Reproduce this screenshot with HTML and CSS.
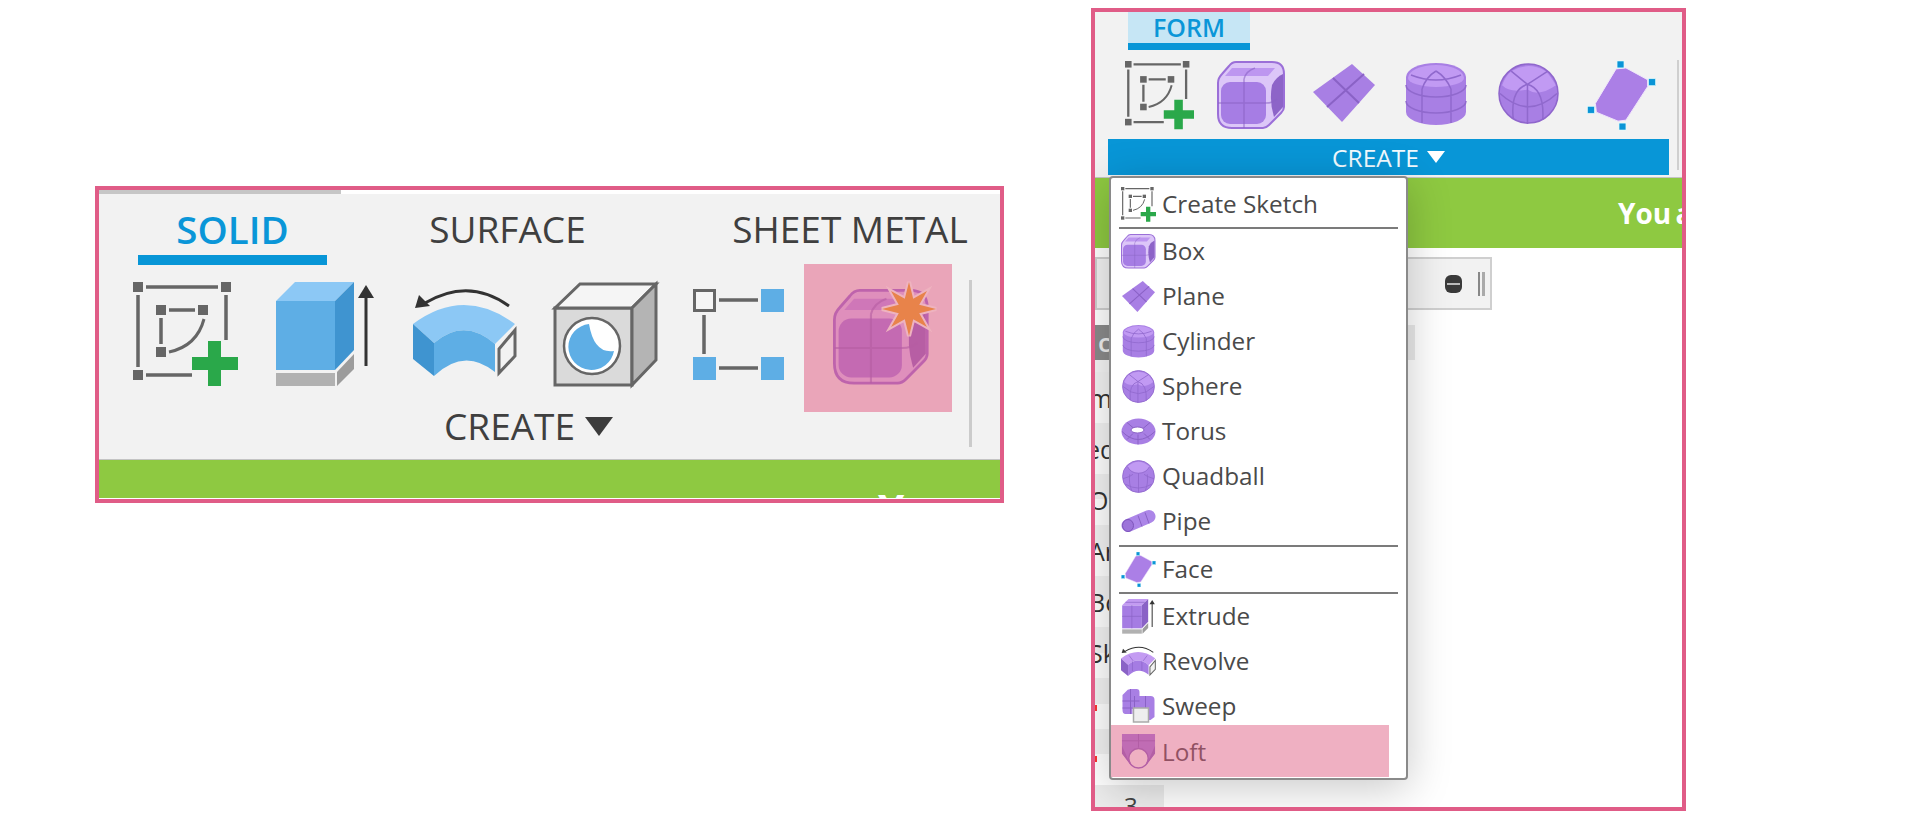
FILE: index.html
```html
<!DOCTYPE html>
<html lang="en">
<head>
<meta charset="utf-8">
<title>Ribbon create menus</title>
<link rel="stylesheet" href="styles.css">
</head>
<body>
<svg class="defs" aria-hidden="true">
  <defs>
    <g id="sketch">
      <g class="sk-sq">
        <rect x="0" y="0" width="10" height="10"/><rect x="88" y="0" width="10" height="10"/><rect x="0" y="88" width="10" height="10"/>
        <rect x="23" y="23" width="10" height="10"/><rect x="65" y="23" width="10" height="10"/><rect x="23" y="65" width="10" height="10"/>
      </g>
      <path class="sk-ln" d="M13 5H85M5 13V85M93 13V58M13 93H59M36 28H62M28 36V62"/>
      <path class="sk-arc" d="M36 70Q64 64 71 37"/>
      <path class="plus" d="M75 59H88V75H105V88H88V104H75V88H59V75H75Z"/>
    </g>
    <g id="box">
      <path class="bx-shell" d="M19 1H55Q67 1 67 13V46Q67 49 64 52L52 64Q49 67 46 67H15Q1 67 1 53V22Q1 17 5 13L12 5Q15 1 19 1Z"/>
      <path class="bx-top" d="M15 7H58L51 15H8Z"/>
      <rect class="bx-front" x="4" y="21" width="45" height="42" rx="9"/>
      <path class="bx-side" d="M55 24Q59 16 66 13V46L57 56Q52 40 55 24Z"/>
      <path class="bx-ln" d="M27 18Q29 10 38 7M27 18V67M1 42H49Q56 42 60 38"/>
    </g>
    <g id="plane">
      <path class="pp" d="M0 28L39 0L62 21L29 58Z"/>
      <path class="pl" d="M20 14L46 39M14 43L51 10"/>
    </g>
    <g id="cyl">
      <path class="pp" d="M0 14A30 14 0 0 1 60 14V49A30 13 0 0 1 0 49Z"/>
      <path class="pt" d="M2 15A28 13 0 0 1 58 15A28 9 0 0 1 2 15Z"/>
      <path class="pl soft" d="M0 22A30 12 0 0 0 60 22M0 38A30 12 0 0 0 60 38M16 26V60M45 26V60M16 26Q20 14 30 8M45 26Q40 14 30 8M5 12Q30 22 55 12"/>
    </g>
    <g id="sphere">
      <circle class="pp" cx="30" cy="30" r="29"/>
      <path class="pt" d="M13 8Q30 -2 47 8Q52 13 57 22Q40 34 29 26Q12 30 4 22Q7 13 13 8Z"/>
      <path class="pl soft" d="M13 8L29 21L49 8M29 21Q12 26 15 55M29 21V60M29 21Q46 26 44 56M2 30Q30 56 58 30"/>
      <circle class="po" cx="30" cy="30" r="29"/>
    </g>
    <g id="qball">
      <circle class="pp" cx="30" cy="30" r="29"/>
      <path class="pt" d="M10 12Q30 -6 50 12Q44 24 30 24Q16 24 10 12Z"/>
      <path class="pl soft" d="M10 12Q16 24 30 24Q44 24 50 12M30 24V59M2 34Q16 30 20 26M58 34Q44 30 40 26M6 44Q30 58 54 44M14 26Q12 44 18 56M46 26Q48 44 42 56"/>
      <circle class="po" cx="30" cy="30" r="29"/>
    </g>
    <g id="face">
      <path class="fc" d="M39 7L61 19V26L39 60L31 61L9 52L8 43L29 8Z"/>
      <rect class="hd" x="30" y="0" width="7" height="7"/><rect class="hd" x="62" y="18" width="7" height="7"/>
      <rect class="hd" x="0" y="46" width="7" height="7"/><rect class="hd" x="32" y="63" width="7" height="7"/>
    </g>
    <g id="extrude">
      <path class="f-front" d="M0 19H59V88H0Z"/>
      <path class="f-top" d="M0 19L19 0H78L59 19Z"/>
      <path class="f-side" d="M59 19L78 0V68L59 88Z"/>
      <path class="base" d="M0 91H59V104H0Z"/>
      <path class="base-side" d="M61 90L78 72V87L61 104Z"/>
      <path class="arrow-ln" d="M90 14V84"/>
      <path class="arrow-hd" d="M82 16L90 3L98 16Z"/>
    </g>
    <g id="revolve">
      <path class="arrow-ln arc" d="M96 17Q56 -12 12 14"/>
      <path class="arrow-hd" d="M2 19L6 6L17 17Z"/>
      <path class="f-top" d="M0 35Q51 -3 102 35L82 55Q51 28 21 54Z"/>
      <path class="f-front" d="M21 54Q51 28 82 55V83Q51 58 21 87Z"/>
      <path class="f-side" d="M0 35L21 54V87L0 70Z"/>
      <path class="prof" d="M86 60L102 41V67L86 84Z"/>
    </g>
  </defs>
</svg>

<main class="stage">
  <section class="panel panel-solid">
    <div class="strip"></div>
    <div class="ribbon">
      <div class="tabs">
        <div class="tab tab-on">SOLID</div>
        <div class="tab tab-surface">SURFACE</div>
        <div class="tab tab-sheet">SHEET METAL</div>
      </div>
      <div class="tools">
        <div class="tool-main">
          <div class="icons">
            <svg class="big-sketch" viewBox="0 0 105 105"><use href="#sketch"/></svg>
            <svg class="big-extrude blue" viewBox="0 0 98 105"><use href="#extrude"/></svg>
            <svg class="big-revolve blue" viewBox="0 0 104 88"><use href="#revolve"/></svg>
            <svg class="big-shell" viewBox="0 0 105 105">
              <path class="sh-front" d="M2 26H79V103H2Z"/>
              <path class="sh-top" d="M2 26L27 2H103L79 26Z"/>
              <path class="sh-side" d="M79 26L103 2V78L79 103Z"/>
              <circle class="sh-ring" cx="39" cy="64" r="28"/>
              <path class="sh-blue" d="M36 42A23 23 0 1 0 61 69Q41 72 36 42Z"/>
            </svg>
            <svg class="big-pattern" viewBox="0 0 91 91">
              <path class="pn-ln" d="M26 11H65M11 26V65M26 79H65"/>
              <rect class="pn-open" x="1.5" y="1.5" width="20" height="20"/>
              <rect class="pn-fill" x="68" y="0" width="23" height="23"/>
              <rect class="pn-fill" x="0" y="68" width="23" height="23"/>
              <rect class="pn-fill" x="68" y="68" width="23" height="23"/>
            </svg>
            <svg class="big-loft" viewBox="0 0 148 148">
              <rect class="canvas" width="148" height="148"/>
              <svg x="29" y="25" width="97" height="97" viewBox="0 0 69 69"><use href="#box"/></svg>
              <rect class="veil" width="148" height="148"/>
              <path class="star" transform="translate(105 45)" d="M0 -27L4.200 -10.200L18 -18L10.200 -4.200L27 0L10.200 4.200L18 18L4.200 10.200L0 27L-4.200 10.200L-18 18L-10.200 4.200L-27 0L-10.200 -4.200L-18 -18L-4.200 -10.200Z"/>
            </svg>
          </div>
          <div class="create">CREATE<span class="tri"></span></div>
        </div>
        <div class="vsep"></div>
      </div>
    </div>
    <div class="banner banner-solid">You are</div>
  </section>

  <section class="panel panel-form">
    <div class="form-ribbon">
      <div class="form-main">
        <div class="form-tab">FORM</div>
        <div class="form-icons">
          <svg class="fi" viewBox="0 0 105 105"><use href="#sketch"/></svg>
          <svg class="fi" viewBox="0 0 69 69"><use href="#box"/></svg>
          <svg class="fi-plane" viewBox="0 0 62 58"><use href="#plane"/></svg>
          <svg class="fi-cyl" viewBox="0 0 60 63"><use href="#cyl"/></svg>
          <svg class="fi-sphere" viewBox="0 0 60 60"><use href="#sphere"/></svg>
          <svg class="fi" viewBox="0 0 69 70"><use href="#face"/></svg>
        </div>
        <div class="form-create">CREATE<span class="tri tri-white"></span></div>
      </div>
      <div class="form-sep"></div>
    </div>
    <div class="banner banner-form">You are</div>
    <div class="page">
      <div class="page-bar">
        <span class="minus"></span>
        <span class="bar-grip"></span>
      </div>
      <div class="head-row"><span class="head-cell">c</span></div>
      <div class="rows">
        <div class="row">m</div>
        <div class="row row-ed">ed</div>
        <div class="row">O</div>
        <div class="row">Ar</div>
        <div class="row">Bo</div>
        <div class="row">Sk</div>
        <div class="row"><span class="red"></span></div>
        <div class="row"><span class="red"></span></div>
      </div>
      <div class="num-cell">3</div>
    </div>

    <div class="menu">
      <div class="mi">
        <svg class="mic" viewBox="0 0 105 105"><use href="#sketch"/></svg><span>Create Sketch</span>
      </div>
      <div class="msep"></div>
      <div class="mi">
        <svg class="mic" viewBox="0 0 69 69"><use href="#box"/></svg><span>Box</span>
      </div>
      <div class="mi">
        <svg class="mic mic-s" viewBox="0 0 62 58"><use href="#plane"/></svg><span>Plane</span>
      </div>
      <div class="mi">
        <svg class="mic mic-s" viewBox="0 0 60 63"><use href="#cyl"/></svg><span>Cylinder</span>
      </div>
      <div class="mi">
        <svg class="mic mic-s" viewBox="0 0 60 60"><use href="#sphere"/></svg><span>Sphere</span>
      </div>
      <div class="mi">
        <svg class="mic" viewBox="0 0 35 28">
          <ellipse class="pp" cx="17.500" cy="14" rx="17" ry="13"/>
          <path class="pl thin" d="M1 14Q17 30 34 14M6 5L13 11M29 5L22 11M17 17V27M6 22L12 16M29 22L23 16"/>
          <ellipse class="hole" cx="16.500" cy="12.500" rx="6.500" ry="3"/>
        </svg><span>Torus</span>
      </div>
      <div class="mi">
        <svg class="mic mic-s" viewBox="0 0 60 60"><use href="#qball"/></svg><span>Quadball</span>
      </div>
      <div class="mi">
        <svg class="mic" viewBox="0 0 35 24">
          <path class="pipe" d="M7 16L28 7"/>
          <ellipse class="pipe-end" cx="7" cy="16" rx="5.500" ry="6"/>
          <path class="pl thin" d="M17 6L21 17M24 3L28 14"/>
        </svg><span>Pipe</span>
      </div>
      <div class="msep msep-gap"></div>
      <div class="mi">
        <svg class="mic" viewBox="0 0 69 70"><use href="#face"/></svg><span>Face</span>
      </div>
      <div class="msep"></div>
      <div class="mi">
        <svg class="mic purple" viewBox="0 0 98 105">
          <use href="#extrude"/>
          <path class="pl" d="M29 19V88M0 52H59M10 10H68"/>
        </svg><span>Extrude</span>
      </div>
      <div class="mi">
        <svg class="mic purple" viewBox="0 0 104 88">
          <use href="#revolve"/>
          <path class="pl" d="M34 44V72M62 44V72M24 26L36 42M78 26L66 42"/>
        </svg><span>Revolve</span>
      </div>
      <div class="mi">
        <svg class="mic" viewBox="0 0 34 35">
          <path class="pp" d="M4 3Q6 0 9 0H15Q18 0 18 3V7H29Q33 7 33 11V28L29 31H26V20H11V25H4Q1 25 1 21V6Z"/>
          <path class="pl thin" d="M1 12H18M9 0V25M13 7V20M24 7V20M1 19H11"/>
          <rect class="swp" x="12" y="19" width="15" height="14"/>
        </svg><span>Sweep</span>
      </div>
      <div class="mi mi-loft">
        <svg class="mic" viewBox="0 0 34 36">
          <path class="bx-front" d="M0 0H34V20L25 32H9L0 20Z"/>
          <path class="bx-side" d="M0 12L9 32L0 20ZM34 12L25 32L34 20Z"/>
          <path class="pl thin" d="M17 0V14M0 7H34"/>
          <circle class="lf" cx="17" cy="25" r="10"/>
        </svg><span>Loft</span>
      </div>
    </div>
  </section>
</main>
</body>
</html>
```

FILE: styles.css
```css
* { box-sizing: border-box; }
html, body { margin: 0; padding: 0; background: #fff; }
body { width: 1920px; height: 821px; overflow: hidden; font-family: "Open Sans", "Noto Sans", sans-serif; color: #3f3f3f; }
.defs { position: absolute; width: 0; height: 0; }
svg { display: block; flex: none; overflow: visible; }

.stage { display: flex; align-items: flex-start; padding: 8px 0 0 95px; }

.panel { border: 4px solid #e05c87; background: #fff; overflow: hidden; position: relative; }
.panel-solid { width: 909px; height: 317px; margin-top: 178px; }
.panel-form { width: 595px; height: 803px; margin-left: 87px; }

/* Left panel */
.strip { width: 242px; height: 4px; background: #c6c6c6; }
.ribbon { height: 266px; background: #f2f2f2; border-bottom: 1px solid #c4c4c4; }
.tabs { display: flex; padding-left: 39px; height: 71px; }
.tab { width: 189px; padding-top: 15px; height: 71px; font-size: 37px; line-height: 40px; text-align: center; white-space: nowrap; }
.tab-on { color: #0a96d8; font-weight: 600; border-bottom: 10px solid #0896d7; font-size: 38.500px; }
.tab-surface { margin-left: 86px; }
.tab-sheet { margin-left: 128px; width: 240px; }

.tools { display: flex; }
.tool-main { width: 870px; }
.icons { display: flex; align-items: flex-start; height: 147px; padding-left: 34px; }
.big-sketch { width: 105px; height: 105px; margin-top: 17px; }
.big-extrude { width: 98px; height: 105px; margin: 17px 0 0 38px; }
.big-revolve { width: 104px; height: 88px; margin: 24px 0 0 39px; }
.big-shell { width: 105px; height: 105px; margin: 17px 0 0 36px; }
.big-pattern { width: 91px; height: 91px; margin: 24px 0 0 35px; }
.big-loft { width: 148px; height: 148px; margin: -1px 0 0 20px; }
.vsep { width: 3px; height: 167px; margin-top: 15px; background: #cbcbcb; flex: none; }

.create { display: flex; align-items: center; gap: 10px; padding-left: 345px; font-size: 37px; line-height: 28px; white-space: nowrap; }
.tri { width: 0; height: 0; border-left: 14.500px solid transparent; border-right: 14.500px solid transparent; border-top: 19px solid #3c3c3c; }

.banner { background: #8ec941; color: #fff; font-weight: 700; white-space: nowrap; overflow: hidden; }
.banner-solid { height: 38px; padding: 25px 0 0 779px; font-size: 42px; line-height: 48px; }
.banner-form { height: 70px; padding-left: 523px; font-size: 28px; line-height: 70px; word-spacing: -3px; }

/* Right panel */
.form-ribbon { display: flex; height: 166px; background: #f2f2f2; border-bottom: 1px solid #c4c4c4; }
.form-main { width: 582px; }
.form-sep { width: 2px; height: 110px; margin-top: 48px; background: #cfcfcf; }
.form-tab { width: 122px; height: 38px; margin-left: 33px; background: #c6e6f5; border-bottom: 7px solid #0896d7; color: #0a96d8; font-size: 25px; font-weight: 600; line-height: 28px; padding-top: 1px; text-align: center; }
.form-icons { display: grid; grid-template-columns: repeat(6, 92.400px); justify-items: center; align-items: start; height: 69px; margin-top: 11px; padding-left: 18px; }
.fi { width: 69px; height: 69px; }
.fi-plane { width: 62px; height: 58px; margin-top: 3px; }
.fi-cyl { width: 60px; height: 63px; margin-top: 2px; }
.fi-sphere { width: 61px; height: 61px; margin-top: 2px; }
.form-create { display: flex; align-items: center; justify-content: center; gap: 8px; width: 561px; height: 36px; margin: 9px 0 0 13px; background: #0896d7; color: #f2fbff; font-size: 24.500px; }
.tri-white { border-left-width: 9px; border-right-width: 9px; border-top: 12px solid #fff; }

.page { background: #fff; }
.page-bar { display: flex; align-items: center; justify-content: flex-end; width: 397px; height: 53px; margin-top: 9px; padding-right: 5px; background: #f2f2f2; border: 2px solid #cfcfcf; }
.minus { width: 17px; height: 18px; border-radius: 6px; background: #3a3a3a; margin-right: 16px; position: relative; }
.minus::after { content: ""; position: absolute; left: 2px; right: 2px; top: 8px; height: 2px; background: #bbb; }
.bar-grip { width: 7px; height: 24px; border-left: 2px solid #888; border-right: 3px solid #aaa; }

.head-row { width: 320px; height: 35px; margin-top: 15px; background: #eaeaea; }
.head-cell { display: block; width: 100px; height: 35px; padding-left: 3px; background: #8b8b8b; color: #eee; font-size: 26px; font-weight: 600; line-height: 35px; }

.rows { width: 70px; padding-top: 12px; background: #f6f6f6; }
.row { display: flex; align-items: center; height: 51px; margin-left: -6px; color: #333; font-size: 25px; background: linear-gradient(#f3f3f3 50%, #fff 50%); }
.row-ed { margin-left: -9px; }
.red { width: 2px; height: 6px; margin: 8px 0 0 6px; background: #f33; }
.num-cell { width: 69px; height: 22px; margin-top: 5px; padding: 6px 0 0 29px; background: #ededed; color: #444; font-size: 24px; line-height: 30px; }

/* Dropdown */
.menu { position: absolute; left: 14px; top: 164px; width: 299px; padding-top: 4px; padding-bottom: 1px; background: #fff; border: 2px solid #8a8a8a; border-radius: 4px; box-shadow: 0 8px 44px rgba(0,0,0,.22); }
.mi { display: flex; align-items: center; height: 45px; padding-left: 10px; font-size: 24.300px; line-height: 30px; color: #4a4a4a; }
.mi span { margin-left: 6px; padding-bottom: 2px; }
.mic { width: 35px; height: 35px; }
.mic-s { width: 33px; height: 33px; margin: 0 1px; }
.msep { height: 2px; margin: 0 8px; background: #7b7b7b; }
.msep-gap { margin-top: 1px; }
.mi-loft { position: relative; height: 52px; margin: -4px 17px 0 0; }
.mi-loft span { padding: 2px 0 0; }
.mi-loft::after { content: ""; position: absolute; inset: 0; background: rgba(222, 90, 128, .48); }

/* Icon paint */
.blue { --top: #8cc8f5; --front: #5eaee5; --side: #3f94d0; }
.purple { --top: #c39bf2; --front: #a57ce3; --side: #8a62c6; }
.f-top { fill: var(--top); }
.f-front { fill: var(--front); }
.f-side { fill: var(--side); }
.base { fill: #b1b1b1; }
.base-side { fill: #9c9c9c; }
.arrow-ln { fill: none; stroke: #333; stroke-width: 3; }
.arrow-hd { fill: #333; }
.prof { fill: #f2f2f2; stroke: #666; stroke-width: 3; }

.sk-sq rect { fill: #666; }
.sk-ln { fill: none; stroke: #666; stroke-width: 3.500; }
.sk-arc { fill: none; stroke: #666; stroke-width: 3; }
.plus { fill: #2aa84a; }

.sh-front { fill: #dadada; stroke: #666; stroke-width: 3; }
.sh-top { fill: #f5f5f5; stroke: #666; stroke-width: 3; }
.sh-side { fill: #b4b4b4; stroke: #666; stroke-width: 3; }
.sh-ring { fill: #fff; stroke: #666; stroke-width: 2.500; }
.sh-blue { fill: #5eaee5; }
.pn-ln { fill: none; stroke: #666; stroke-width: 3.500; }
.pn-open { fill: #f5f5f5; stroke: #666; stroke-width: 3; }
.pn-fill { fill: #5eaee5; }

.canvas { fill: #f2f2f2; }
.veil { fill: rgba(226, 88, 128, .5); }
.star { fill: #e8834a; stroke: #eeb3bf; stroke-width: 4; paint-order: stroke; }

.bx-shell { fill: #dcc6f8; stroke: #9b6fd8; stroke-width: 2; }
.bx-top { fill: #bd96f0; }
.bx-front { fill: #a67de4; }
.bx-side { fill: #8d64c8; }
.bx-ln { fill: none; stroke: #8a63c4; stroke-width: 1.500; opacity: .6; }
.pp { fill: #a87fe4; }
.pt { fill: #c19af3; }
.po { fill: none; stroke: #8f66cc; stroke-width: 1.500; }
.pl { fill: none; stroke: #8a62c6; stroke-width: 2; }
.soft { stroke-width: 1.500; stroke: #9069cd; }
.thin { stroke-width: 1; }
.fc { fill: #ab7fe6; stroke: #f0e6fb; stroke-width: 1; }
.hd { fill: #0a94d6; stroke: #dff; stroke-width: .6; }
.hole { fill: #fff; stroke: #8a62c6; stroke-width: 1; }
.pipe { fill: none; stroke: #ac86e8; stroke-width: 13; stroke-linecap: round; }
.pipe-end { fill: #9d74da; stroke: #7d55bb; stroke-width: 1; }
.swp { fill: #eee; stroke: #aaa; stroke-width: 1.500; }
.lf { fill: #fff; stroke: #8d64c8; stroke-width: 1.500; }
```
